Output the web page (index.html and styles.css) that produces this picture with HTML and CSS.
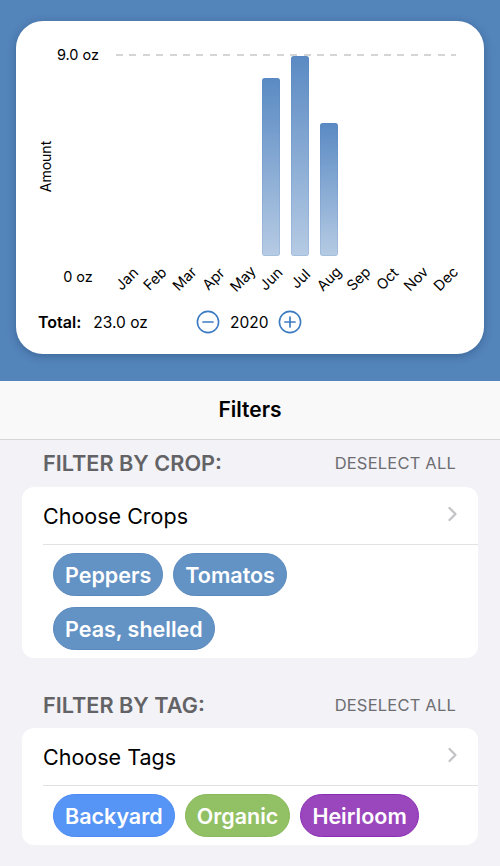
FILE: index.html
```html
<!DOCTYPE html>
<html lang="en">
<head>
<meta charset="utf-8">
<title>Harvest Filters</title>
<link rel="stylesheet" href="styles.css">
</head>
<body>
<div class="hero">
  <div class="card">
    <div class="chart">
      <div class="axis-title"><span>Amount</span></div>
      <div class="y-max">9.0 oz</div>
      <div class="gridline"></div>
      <div class="bars">
        <div class="col"></div>
        <div class="col"></div>
        <div class="col"></div>
        <div class="col"></div>
        <div class="col"></div>
        <div class="col"><div class="bar" style="height:178px"></div></div>
        <div class="col"><div class="bar" style="height:200px"></div></div>
        <div class="col"><div class="bar" style="height:133px"></div></div>
        <div class="col"></div>
        <div class="col"></div>
        <div class="col"></div>
        <div class="col"></div>
      </div>
      <div class="y-min">0 oz</div>
      <div class="months">
        <div class="m"><span>Jan</span></div>
        <div class="m"><span>Feb</span></div>
        <div class="m"><span>Mar</span></div>
        <div class="m"><span>Apr</span></div>
        <div class="m"><span>May</span></div>
        <div class="m"><span>Jun</span></div>
        <div class="m"><span>Jul</span></div>
        <div class="m"><span>Aug</span></div>
        <div class="m"><span>Sep</span></div>
        <div class="m"><span>Oct</span></div>
        <div class="m"><span>Nov</span></div>
        <div class="m"><span>Dec</span></div>
      </div>
    </div>
    <div class="summary">
      <div class="total">
        <span class="total-label">Total:</span>
        <span class="total-value">23.0 oz</span>
      </div>
      <div class="stepper">
        <svg class="step-icon" width="24" height="24" viewBox="0 0 24 24" aria-hidden="true">
          <circle cx="12" cy="12" r="10.6" fill="none" stroke="#3b7bc1" stroke-width="1.6"/>
          <line x1="7" y1="12" x2="17" y2="12" stroke="#3b7bc1" stroke-width="1.7" stroke-linecap="round"/>
        </svg>
        <span class="year">2020</span>
        <svg class="step-icon" width="24" height="24" viewBox="0 0 24 24" aria-hidden="true">
          <circle cx="12" cy="12" r="10.6" fill="none" stroke="#3b7bc1" stroke-width="1.6"/>
          <line x1="7" y1="12" x2="17" y2="12" stroke="#3b7bc1" stroke-width="1.7" stroke-linecap="round"/>
          <line x1="12" y1="7" x2="12" y2="17" stroke="#3b7bc1" stroke-width="1.7" stroke-linecap="round"/>
        </svg>
      </div>
    </div>
  </div>
</div>

<div class="navbar">Filters</div>

<div class="content">
  <div class="section-head">
    <span class="section-title">FILTER BY CROP:</span>
    <span class="deselect">DESELECT ALL</span>
  </div>
  <div class="group">
    <div class="row">
      <span class="row-label">Choose Crops</span>
      <svg class="chevron" width="11" height="16" viewBox="0 0 11 16" aria-hidden="true">
        <polyline points="2.5,2 8.5,8 2.5,14" fill="none" stroke="#c4c4c7" stroke-width="2.3" stroke-linecap="round" stroke-linejoin="round"/>
      </svg>
    </div>
    <div class="chips">
      <span class="chip chip-crop">Peppers</span>
      <span class="chip chip-crop">Tomatos</span>
      <span class="chip chip-crop">Peas, shelled</span>
    </div>
  </div>

  <div class="section-head section-head-2">
    <span class="section-title">FILTER BY TAG:</span>
    <span class="deselect">DESELECT ALL</span>
  </div>
  <div class="group">
    <div class="row">
      <span class="row-label">Choose Tags</span>
      <svg class="chevron" width="11" height="16" viewBox="0 0 11 16" aria-hidden="true">
        <polyline points="2.5,2 8.5,8 2.5,14" fill="none" stroke="#c4c4c7" stroke-width="2.3" stroke-linecap="round" stroke-linejoin="round"/>
      </svg>
    </div>
    <div class="chips">
      <span class="chip chip-backyard">Backyard</span>
      <span class="chip chip-organic">Organic</span>
      <span class="chip chip-heirloom">Heirloom</span>
    </div>
  </div>
</div>
</body>
</html>
```

FILE: styles.css
```css
* {
  box-sizing: border-box;
}

html, body {
  margin: 0;
  padding: 0;
}

body {
  width: 500px;
  height: 866px;
  overflow: hidden;
  background: #f2f2f7;
  font-family: Inter, "Noto Sans", "Liberation Sans", sans-serif;
  color: #000;
}

/* ---------- Hero / chart card ---------- */
.hero {
  background: #5384ba;
  padding: 21px 16px 27px;
}

.card {
  background: #fff;
  border-radius: 27px;
  padding: 26px 0 21px 20px;
  box-shadow: 0 2px 8px rgba(20, 50, 90, 0.35);
}

.chart {
  display: grid;
  grid-template-columns: 20px 55.5px 348px;
  grid-template-rows: 16px 193px 44px;
}

.axis-title {
  grid-column: 1;
  grid-row: 1 / 3;
  display: flex;
  align-items: center;
  justify-content: center;
  padding-top: 29px;
  font-size: 14px;
}

.axis-title span {
  display: block;
  white-space: nowrap;
  transform: rotate(-90deg);
}

.y-max,
.y-min {
  text-align: center;
  font-size: 14.5px;
  line-height: 16px;
  padding-right: 11.5px;
  white-space: nowrap;
}

.y-max {
  grid-column: 2;
  grid-row: 1;
}

.y-min {
  grid-column: 2;
  grid-row: 3;
  align-self: center;
  margin-top: -2px;
}

.gridline {
  grid-column: 3;
  grid-row: 1;
  align-self: center;
  height: 2px;
  margin: 0 3.5px 0 4.5px;
  background: repeating-linear-gradient(90deg, #d5d5d5 0 7px, transparent 7px 13.4px);
}

.bars {
  grid-column: 3;
  grid-row: 1 / 3;
  display: flex;
  align-items: flex-end;
  position: relative;
  z-index: 1;
}

.col {
  flex: 0 0 29px;
  display: flex;
  justify-content: center;
  align-items: flex-end;
}

.bar {
  width: 18px;
  border-radius: 3px;
  background: linear-gradient(180deg, #5a8ac3 0%, #b6cbe4 100%);
  box-shadow: inset 0 0 0 0.5px rgba(80, 130, 190, 0.35);
}

.months {
  grid-column: 3;
  grid-row: 3;
  display: flex;
}

.m {
  flex: 0 0 29px;
  display: flex;
  align-items: center;
  justify-content: center;
  font-size: 14.5px;
  padding-top: 1px;
}

.m span {
  display: block;
  white-space: nowrap;
  transform: rotate(-45deg);
}

.summary {
  display: flex;
  align-items: center;
  height: 22px;
  margin-top: 11px;
  margin-left: 2px;
}

.total {
  width: 159px;
  display: flex;
  align-items: center;
  gap: 12px;
  font-size: 15.5px;
}

.total-label {
  font-weight: 600;
  font-size: 16px;
}

.stepper {
  display: flex;
  align-items: center;
  gap: 10px;
  font-size: 15.5px;
  margin-left: -1px;
}

.step-icon {
  display: block;
}

/* ---------- Nav bar ---------- */
.navbar {
  height: 59px;
  line-height: 58px;
  background: #f9f9f9;
  border-bottom: 1px solid #d6d6d8;
  text-align: center;
  font-size: 21px;
  font-weight: 600;
}

/* ---------- Filter sections ---------- */
.content {
  padding: 12px 22px 0;
}

.section-head {
  display: flex;
  justify-content: space-between;
  align-items: center;
  height: 22px;
  padding: 0 22px 0 21px;
  margin-bottom: 13px;
}

.section-head-2 {
  margin-top: 36px;
  margin-bottom: 12px;
}

.section-title {
  font-size: 21.7px;
  font-weight: 600;
  color: #636366;
}

.deselect {
  font-size: 16.5px;
  color: #6d6d72;
  letter-spacing: 0.2px;
}

.group {
  background: #fff;
  border-radius: 12px;
  overflow: hidden;
}

.row {
  height: 57px;
  display: flex;
  align-items: center;
  justify-content: space-between;
  padding: 0 20px 0 21px;
}

.row-label {
  font-size: 21.5px;
}

.chevron {
  display: block;
  margin-top: -3px;
}

.chips {
  border-top: 1px solid #e2e2e5;
  margin-left: 21px;
  padding: 8px 31px 8px 10px;
  display: flex;
  flex-wrap: wrap;
  gap: 11px 10px;
}

.chip {
  display: inline-flex;
  align-items: center;
  height: 43px;
  padding: 0 11px;
  border-radius: 22px;
  color: #fff;
  font-size: 21.5px;
  font-weight: 600;
  border: 1px solid transparent;
}

.chip-crop {
  background: #6392c4;
  border-color: #5a89be;
}

.chip-backyard {
  background: #5694f5;
  border-color: #4a8af2;
}

.chip-organic {
  background: #92c064;
  border-color: #87b859;
}

.chip-heirloom {
  background: #9a46bd;
  border-color: #8a2db4;
}
```
